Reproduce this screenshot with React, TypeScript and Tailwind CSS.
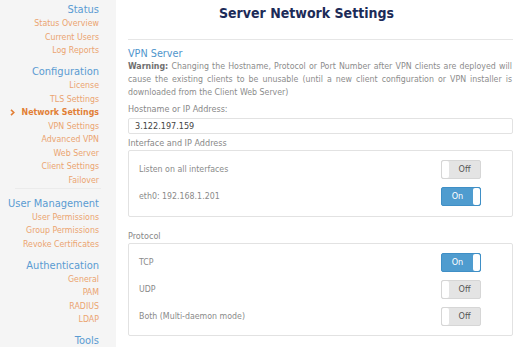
const nav = [
  { title: "Status", items: ["Status Overview", "Current Users", "Log Reports"] },
  {
    title: "Configuration",
    items: ["License", "TLS Settings", "Network Settings", "VPN Settings", "Advanced VPN", "Web Server", "Client Settings", "Failover"],
  },
  { title: "User Management", items: ["User Permissions", "Group Permissions", "Revoke Certificates"] },
  { title: "Authentication", items: ["General", "PAM", "RADIUS", "LDAP"] },
  { title: "Tools", items: [] as string[] },
];

const Toggle = ({ on }: { on: boolean }) => {
  return on ? (
    <div className="flex h-[19px] w-[40px] rounded-[2px] border border-[#3f8fc6] bg-[#4f9ccf] overflow-hidden">
      <span className="flex-1 text-center text-[9px] leading-[17px] text-white">On</span>
      <span className="w-[7px] bg-white rounded-[2px]"></span>
    </div>
  ) : (
    <div className="flex h-[19px] w-[40px] rounded-[2px] border border-[#d6d6d6] bg-[#e4e4e4] overflow-hidden">
      <span className="w-[7px] bg-white rounded-[2px]"></span>
      <span className="flex-1 text-center text-[9px] leading-[17px] text-[#555]">Off</span>
    </div>
  );
};

const Row = ({ label, on }: { label: string; on: boolean }) => (
  <div className="flex items-center justify-between h-[19px]">
    <span className="text-[8.75px] text-[#8a8a8a]">{label}</span>
    <Toggle on={on} />
  </div>
);

export default function App() {
  return (
    <div className="flex w-[516px] h-[347px] overflow-hidden bg-white font-['DejaVu_Sans_Condensed','DejaVu_Sans',sans-serif]">
      {/* sidebar */}
      <div className="w-[116px] shrink-0 bg-[#f5f5f5] pr-[17px] pt-[3px] text-right">
        {nav.map((g, i) => (
          <div key={g.title} className={i > 0 ? "mt-[7.5px]" : ""}>
            <div className="h-[14px] leading-[14px] text-[11px] text-[#5a9bd2] whitespace-nowrap">{g.title}</div>
            {g.items.map((it) =>
              it === "Network Settings" ? (
                <div key={it} className="flex items-center justify-end h-[13.5px] leading-[13.5px] text-[8.75px] font-bold text-[#e27f35] whitespace-nowrap">
                  <svg width="5" height="7" viewBox="0 0 5 7" className="mr-[7px]">
                    <path d="M1 0.8 L3.8 3.5 L1 6.2" fill="none" stroke="#e27f35" strokeWidth="1.6" />
                  </svg>
                  {it}
                </div>
              ) : (
                <div key={it} className="h-[13.5px] leading-[13.5px] text-[8.75px] text-[#eba470] whitespace-nowrap">
                  {it}
                </div>
              )
            )}
            {g.title === "Configuration" && <div className="ml-[15px] mr-[-2px] mt-[1px] border-t border-[#ebebeb]"></div>}
          </div>
        ))}
      </div>

      {/* main */}
      <div className="flex-1 pl-[12px] pr-[3px]">
        <h1 className="pt-[3px] h-[32px] leading-[20px] text-[14px] font-bold text-[#1c2b58] text-center pr-[28px]">
          Server Network Settings
        </h1>
        <div className="mt-[7px] border-t border-[#e6e6e6]"></div>

        <h2 className="mt-[6px] h-[15px] leading-[15px] text-[10.75px] text-[#4f95cc]">VPN Server</h2>
        <p className="mt-[-1px] text-[8.75px] leading-[13px] text-[#8c8c8c] text-justify pr-[1px]">
          <b className="text-[#6f6f6f]">Warning:</b> Changing the Hostname, Protocol or Port Number after VPN clients are deployed will
          cause the existing clients to be unusable (until a new client configuration or VPN installer is downloaded from the Client Web
          Server)
        </p>

        <div className="mt-[4px] h-[13px] leading-[13px] text-[9px] text-[#888]">Hostname or IP Address:</div>
        <div className="mt-[2px] h-[16px] border border-[#e2e2e2] rounded-[2px] px-[6px] leading-[14px] text-[9px] text-[#444]">
          3.122.197.159
        </div>

        <div className="mt-[3px] h-[13px] leading-[13px] text-[9px] text-[#888]">Interface and IP Address</div>
        <div className="border border-[#e2e2e2] rounded-[2px] pl-[10px] pr-[31px] pt-[9px] pb-[10px] flex flex-col gap-[8px]">
          <Row label="Listen on all interfaces" on={false} />
          <Row label="eth0: 192.168.1.201" on={true} />
        </div>

        <div className="mt-[13px] h-[13px] leading-[13px] text-[9px] text-[#888]">Protocol</div>
        <div className="border border-[#e2e2e2] rounded-[2px] pl-[10px] pr-[31px] pt-[9px] pb-[9px] flex flex-col gap-[8px]">
          <Row label="TCP" on={true} />
          <Row label="UDP" on={false} />
          <Row label="Both (Multi-daemon mode)" on={false} />
        </div>
      </div>
    </div>
  );
}
